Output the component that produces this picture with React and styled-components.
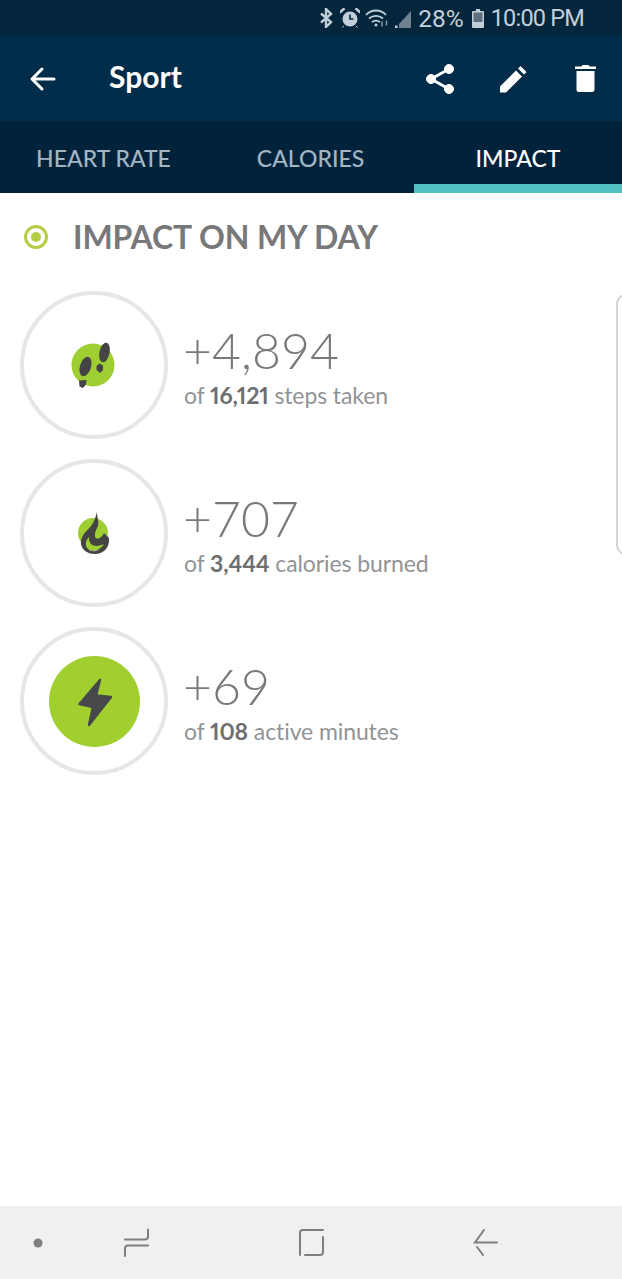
import React from "react";
import styled, { createGlobalStyle } from "styled-components";

const GlobalStyle = createGlobalStyle`
  html, body {
    margin: 0;
    padding: 0;
    background: #fff;
    font-family: "Lato", "Open Sans", sans-serif;
  }
`;

const Screen = styled.div`
  position: relative;
  width: 622px;
  height: 1279px;
  display: flex;
  flex-direction: column;
  overflow: hidden;
  background: #fff;
`;

// status bar //
const StatusBar = styled.div`
  height: 36px;
  background: #03263d;
  color: #c3cfd8;
  display: flex;
  align-items: center;
  justify-content: flex-end;
  padding-right: 38px;
  font-family: "Roboto", sans-serif;
  font-size: 23.5px;
`;

const StatusIcons = styled.div`
  display: flex;
  align-items: center;
  gap: 5px;
  margin-right: 7px;
`;

const Percent = styled.span`
  margin-right: 8px;
  font-size: 24.5px;
`;

const Clock = styled.span`
  margin-left: 7px;
  letter-spacing: -0.8px;
`;

// app bar //
const AppBar = styled.div`
  height: 85px;
  background: #012c4a;
  display: flex;
  align-items: center;
  padding: 0 26px 0 29px;
`;

const Title = styled.h1`
  margin: 0 0 5px 52px;
  flex: 1;
  color: #fff;
  font-size: 30px;
  font-weight: 700;
`;

const Actions = styled.div`
  display: flex;
  align-items: center;
  gap: 45px;
`;

// tabs //
const Tabs = styled.div`
  height: 72px;
  background: #00233b;
  display: grid;
  grid-template-columns: 207px 207px 208px;
`;

const Tab = styled.div`
  display: flex;
  align-items: flex-start;
  justify-content: center;
  padding-top: 23px;
  box-sizing: border-box;
  height: 72px;
  font-size: 23px;
  font-weight: 500;
  color: ${(props) => (props.active ? "#fff" : "#a3b5c3")};
  border-bottom: 9px solid ${(props) => (props.active ? "#4fc1c3" : "transparent")};
`;

// content //
const Content = styled.div`
  flex: 1;
  padding: 0 20px;
`;

const Heading = styled.div`
  display: flex;
  align-items: center;
  height: 88px;
  padding-left: 4px;
  gap: 25px;
`;

const Dot = styled.span`
  width: 24px;
  height: 24px;
  box-sizing: border-box;
  border: 3px solid #b4cf45;
  border-radius: 50%;
  display: flex;
  align-items: center;
  justify-content: center;

  &::after {
    content: "";
    width: 10px;
    height: 10px;
    border-radius: 50%;
    background: #b4cf45;
  }
`;

const HeadingText = styled.h2`
  margin: 0 0 2px;
  font-size: 32px;
  font-weight: 700;
  letter-spacing: -0.1px;
  color: #77787a;
`;

const Rows = styled.div`
  display: flex;
  flex-direction: column;
  gap: 20px;
  margin-top: 10px;
`;

const Row = styled.div`
  display: flex;
  align-items: center;
  gap: 15px;
`;

const Ring = styled.div`
  width: 148px;
  height: 148px;
  box-sizing: border-box;
  border: 4px solid #e6e6e6;
  border-radius: 50%;
  display: flex;
  align-items: center;
  justify-content: center;
`;

const Stats = styled.div`
  display: flex;
  flex-direction: column;
`;

const Value = styled.div`
  font-size: 50px;
  font-weight: 300;
  line-height: 60px;
  color: #77787a;
`;

const Caption = styled.div`
  font-size: 23px;
  font-weight: 400;
  line-height: 30px;
  letter-spacing: -0.1px;
  padding-left: 1px;
  color: #929395;
  font-variant-numeric: proportional-nums;

  b {
    font-weight: 700;
    color: #6d6e70;
  }
`;

const SidePanel = styled.div`
  position: absolute;
  left: 616px;
  top: 294px;
  width: 20px;
  height: 261px;
  box-sizing: border-box;
  border: 2px solid #d4d4d4;
  border-radius: 10px;
`;

// bottom nav //
const NavBar = styled.div`
  height: 73px;
  background: #f0f0f0;
  display: flex;
  align-items: center;
  padding-left: 32px;
  box-sizing: border-box;
`;

const NavSlot = styled.div`
  display: flex;
  margin-left: ${(props) => props.offset}px;
`;

const Back = () => (
  <svg width="28" height="26" viewBox="0 0 28 26" fill="none" stroke="#fff" strokeWidth="3" strokeLinecap="round" strokeLinejoin="round">
    <path d="M25 13H3M13 3 3 13l10 10" />
  </svg>
);

const Share = () => (
  <svg width="28" height="30" viewBox="0 0 28 30" fill="#fff" stroke="#fff">
    <circle cx="5" cy="15" r="4.500" />
    <circle cx="23" cy="5" r="4.500" />
    <circle cx="23" cy="25" r="4.500" />
    <path d="M5 15 23 5M5 15l18 10" strokeWidth="3" />
  </svg>
);

const Pencil = () => (
  <svg width="31" height="28" viewBox="0 0 31 28" fill="#fff">
    <path d="M1 21.500 17 5.500l6 6L7 27.500H1zM19 3.500 21.500 1l6 6L25 9.500z" />
  </svg>
);

const Trash = () => (
  <svg width="21" height="27" viewBox="0 0 21 27" fill="#fff">
    <path d="M0 1.500h6.500L7.500 0h6l1 1.500H21V4H0zM1.500 6h18v18.500a2.500 2.500 0 0 1-2.500 2.500H4a2.500 2.500 0 0 1-2.500-2.500z" />
  </svg>
);

const Bluetooth = () => (
  <svg width="15" height="20" viewBox="0 0 15 20" fill="none" stroke="#c3cfd8" strokeWidth="2.400">
    <path d="M1 5.500 11 14l-5 5V1l5 5-10 8.500" />
  </svg>
);

const Alarm = () => (
  <svg width="20" height="20" viewBox="0 0 20 20">
    <circle cx="10" cy="11" r="7.500" fill="#c3cfd8" />
    <path d="M10 6.500V11h3.500" stroke="#03263d" strokeWidth="1.600" fill="none" />
    <path d="M0.500 5 5 1 3 0.500 0.500 2.500zM19.500 5 15 1l2-.5 2.500 2zM4 18l-1.500 1.500M16 18l1.500 1.500" fill="#c3cfd8" stroke="#c3cfd8" />
  </svg>
);

const Wifi = () => (
  <svg width="25" height="20" viewBox="0 0 25 20" fill="none" stroke="#c3cfd8" strokeWidth="1.800">
    <path d="M1 7c5.500-6 14.500-6 20 0M4 10.500c4-3.500 10-3.500 14 0M7 14c2.500-1.800 5.500-1.800 8 0" />
    <circle cx="11" cy="17" r="1.500" fill="#c3cfd8" stroke="none" />
    <path d="M17 13.500v5M21.500 12.500v5" strokeWidth="1.400" stroke="#8ea0ad" />
  </svg>
);

const Signal = () => (
  <svg width="16" height="20" viewBox="0 0 16 20">
    <path d="M0 20v-2.500h2.500V20z" fill="#c3cfd8" />
    <path d="M4 20v-4L16 3v17z" fill="#6f8290" />
  </svg>
);

const Battery = () => (
  <svg width="12" height="19" viewBox="0 0 12 19">
    <path d="M4 0h4v2h3a1 1 0 0 1 1 1v15a1 1 0 0 1-1 1H1a1 1 0 0 1-1-1V3a1 1 0 0 1 1-1h3z" fill="#c3cfd8" />
    <rect x="1.500" y="3.500" width="9" height="9.500" fill="#5c7080" />
  </svg>
);

const Steps = () => (
  <svg width="46" height="46" viewBox="0 0 46 46">
    <circle cx="22" cy="23" r="21.500" fill="#9fce32" />
    <ellipse cx="33.500" cy="10.500" rx="5" ry="10" transform="rotate(12 33.500 10.500)" fill="#444" />
    <ellipse cx="14.500" cy="24.500" rx="5.500" ry="10" transform="rotate(18 14.500 24.500)" fill="#444" />
    <path d="M25.500 24l3-2.500 3.500 2v4.500l-3 3-3.500-3zM8 38.500l7.500-.5-.5 4.500-3 3.500-3.500-1.500z" fill="#444" />
  </svg>
);

const Flame = () => (
  <svg width="34" height="48" viewBox="0 0 34 48">
    <circle cx="16" cy="24" r="15" fill="#9fce32" />
    <path d="M20 3c0 7 3 11 0 16-2 4-3 8-1 10 2 2 6-1 8-5l5 5c1 9-5 16-14 16C9 45 3 39 4 32c1-8 9-12 12-18 2-4 3-7 4-11z" fill="#444" />
    <path d="M12 28c-4 4-4 9-1 12 4 3 12 2 16-5-4 2-10 3-13 0-2-2-2-5-2-7z" fill="#9fce32" />
    <path d="M11 40c4 3 10 2 13-1-3 3.500-9 4.500-13 1z" fill="#fff" />
  </svg>
);

const Bolt = () => (
  <svg width="91" height="91" viewBox="0 0 91 91">
    <circle cx="45.500" cy="45.500" r="45.500" fill="#a0cf2f" />
    <path d="M51 24 30.500 48l13.500 3-4 18 22-28-15-1.500z" fill="#47484a" stroke="#47484a" strokeWidth="2.500" strokeLinejoin="round" />
  </svg>
);

const NavDot = () => (
  <svg width="12" height="12" viewBox="0 0 12 12">
    <circle cx="6" cy="6" r="4.500" fill="#7f7f7f" />
  </svg>
);

const NavRecent = () => (
  <svg width="25" height="30" viewBox="0 0 25 30" fill="none" stroke="#7f7f7f" strokeWidth="2" strokeLinecap="round">
    <path d="M1 11.500h20c2 0 3-1 3-3V1.500M24 17.500H4c-2 0-3 1-3 3v7.500" />
  </svg>
);

const NavHome = () => (
  <svg width="25" height="28" viewBox="0 0 25 28" fill="none" stroke="#7f7f7f" strokeWidth="2" strokeLinecap="round">
    <path d="M1 26V4c0-2 1-3 3-3h20M24 8v15c0 2-1 3-3 3H6" />
  </svg>
);

const NavBack = () => (
  <svg width="25" height="30" viewBox="0 0 25 30" fill="none" stroke="#7f7f7f" strokeWidth="2" strokeLinecap="round">
    <path d="M24 14.500H2L11 2M4 19l6 8" />
  </svg>
);

const impact = [
  { value: "+4,894", total: "16,121", label: "steps taken", icon: <Steps /> },
  { value: "+707", total: "3,444", label: "calories burned", icon: <Flame /> },
  { value: "+69", total: "108", label: "active minutes", icon: <Bolt /> },
];

export default function App() {
  return (
    <Screen>
      <GlobalStyle />
      <StatusBar>
        <StatusIcons>
          <Bluetooth />
          <Alarm />
          <Wifi />
          <Signal />
        </StatusIcons>
        <Percent>28%</Percent>
        <Battery />
        <Clock>10:00 PM</Clock>
      </StatusBar>
      <AppBar>
        <Back />
        <Title>Sport</Title>
        <Actions>
          <Share />
          <Pencil />
          <Trash />
        </Actions>
      </AppBar>
      <Tabs>
        <Tab>HEART RATE</Tab>
        <Tab>CALORIES</Tab>
        <Tab active>IMPACT</Tab>
      </Tabs>
      <Content>
        <Heading>
          <Dot />
          <HeadingText>IMPACT ON MY DAY</HeadingText>
        </Heading>
        <Rows>
          {impact.map((item) => (
            <Row key={item.label}>
              <Ring>{item.icon}</Ring>
              <Stats>
                <Value>{item.value}</Value>
                <Caption>
                  of <b>{item.total}</b> {item.label}
                </Caption>
              </Stats>
            </Row>
          ))}
        </Rows>
      </Content>
      <SidePanel />
      <NavBar>
        <NavSlot offset={0}><NavDot /></NavSlot>
        <NavSlot offset={80}><NavRecent /></NavSlot>
        <NavSlot offset={150}><NavHome /></NavSlot>
        <NavSlot offset={149}><NavBack /></NavSlot>
      </NavBar>
    </Screen>
  );
}
